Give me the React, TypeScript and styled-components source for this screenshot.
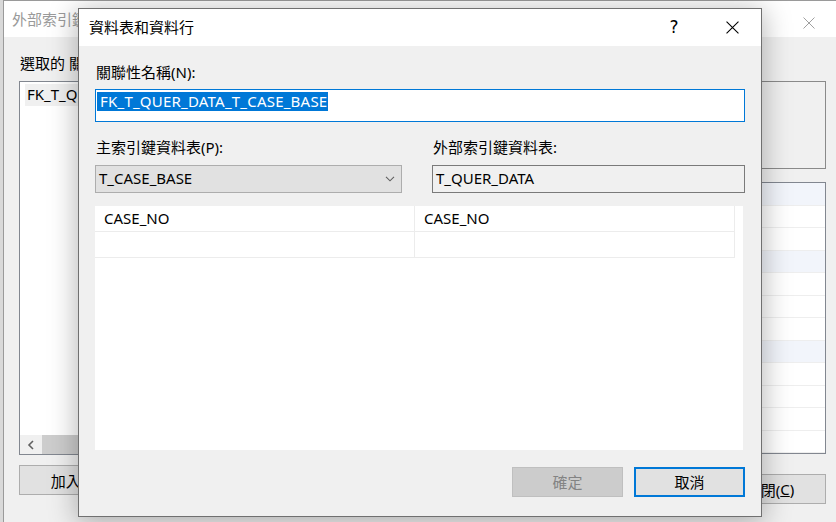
import React from "react";
import styled, { createGlobalStyle } from "styled-components";

const FONT = `"Noto Sans", "Noto Sans CJK TC", sans-serif`;

const Global = createGlobalStyle`
  html, body { margin: 0; padding: 0; }
  body {
    width: 836px; height: 522px; overflow: hidden;
    background: #d9d9d9;
    font-family: ${FONT};
    font-size: 15px;
    color: #000;
  }
  #root { width: 836px; height: 522px; position: relative; overflow: hidden; }
`;

const Desktop = styled.div`
  position: relative;
  width: 836px;
  height: 522px;
`;

/* ---------- background window ---------- */
const BgWindow = styled.div`
  position: absolute;
  left: 3px;
  top: 0;
  width: 840px;
  height: 530px;
  border-top: 1px solid #9a9a9a;
  border-left: 1px solid #9a9a9a;
  background: #f0f0f0;
  display: flex;
  flex-direction: column;
`;

const BgTitle = styled.div`
  height: 36px;
  background: #fff;
  display: flex;
  align-items: center;
  padding-left: 8px;
  padding-bottom: 1px;
  box-sizing: border-box;
  color: #9a9a9a;
  position: relative;
`;

const BgClose = styled.div`
  position: absolute;
  left: 799px;
  top: 12px;
  width: 12px;
  height: 12px;
`;

const BgBody = styled.div`
  flex: 1;
  display: grid;
  grid-template-columns: 300px 1fr;
  column-gap: 40px;
  padding: 0 18px 0 15px;
`;

const BgCol = styled.div`
  display: flex;
  flex-direction: column;
`;

const BgLabel = styled.div`
  height: 20px;
  line-height: 20px;
  margin-top: 16px;
  margin-left: 1px;
`;

const BgList = styled.div<{ $h: number; $top: number }>`
  margin-top: ${(p) => p.$top}px;
  height: ${(p) => p.$h}px;
  border: 1px solid #828790;
  background: #fff;
  display: flex;
  flex-direction: column;
  position: relative;
`;

const BgListItem = styled.div`
  margin: 2px 0 0 5px;
  height: 22px;
  line-height: 21px;
  background: #f0f0f0;
  padding-left: 2px;
`;

const HScroll = styled.div`
  margin-top: auto;
  height: 19px;
  display: flex;
  background: #f0f0f0;
`;

const ScrollArrow = styled.div`
  width: 22px;
  display: flex;
  align-items: center;
  justify-content: center;
`;

const ScrollThumb = styled.div`
  flex: 1;
  background: #cdcdcd;
`;

const BgBox = styled.div`
  margin-top: 44px;
  height: 86px;
  border: 1px solid #8a8a8a;
  background: #f0f0f0;
`;

const PropRow = styled.div<{ $alt: boolean }>`
  height: 22px;
  border-bottom: 1px solid #eeeeee;
  background: ${(p) => (p.$alt ? "#f2f5fb" : "#fff")};
`;

const BgButton = styled.div<{ $top: number; $w: number; $self?: string }>`
  margin-top: ${(p) => p.$top}px;
  width: ${(p) => p.$w}px;
  height: 28px;
  align-self: ${(p) => p.$self || "flex-start"};
  border: 1px solid #adadad;
  background: #e1e1e1;
  display: flex;
  align-items: center;
  justify-content: center;
`;

/* ---------- dialog ---------- */
const Dialog = styled.div`
  position: absolute;
  left: 78px;
  top: 8px;
  width: 682px;
  height: 507px;
  border: 1px solid #707070;
  background: #f0f0f0;
  box-shadow: 0 4px 26px 2px rgba(0, 0, 0, 0.28);
  display: flex;
  flex-direction: column;
`;

const TitleBar = styled.div`
  height: 37px;
  background: #fff;
  display: flex;
  align-items: center;
`;

const TitleText = styled.div`
  flex: 1;
  padding-left: 10px;
  padding-bottom: 2px;
`;

const TitleBtn = styled.div`
  width: 58px;
  height: 37px;
  display: flex;
  align-items: center;
  justify-content: center;
`;

const Help = styled.span`
  font-family: "Segoe UI", "DejaVu Sans", sans-serif;
  font-size: 17px;
  line-height: 1;
  margin-top: -1px;
`;

const Body = styled.div`
  flex: 1;
  display: flex;
  flex-direction: column;
  padding: 0 16px 0 16px;
`;

const Label = styled.div<{ $top: number }>`
  height: 20px;
  line-height: 19px;
  margin-top: ${(p) => p.$top}px;
  padding-left: 1px;
`;

const NameInput = styled.div`
  margin-top: 6px;
  height: 31px;
  border: 1px solid #0078d7;
  background: #fff;
  display: flex;
  align-items: flex-start;
  padding: 2px 0 0 1px;
  box-sizing: content-box;
  height: 29px;
`;

const Selected = styled.span`
  background: #0078d7;
  color: #fff;
  height: 19px;
  line-height: 19px;
  padding: 0 1px 0 3px;
  letter-spacing: 0.22px;
`;

const TwoCols = styled.div`
  display: grid;
  grid-template-columns: 307px 313px;
  column-gap: 30px;
`;

const Field = styled.div`
  display: flex;
  flex-direction: column;
`;

const Combo = styled.div`
  margin-top: 7px;
  height: 26px;
  border: 1px solid #adadad;
  background: #e1e1e1;
  display: flex;
  align-items: center;
  padding: 0 6px 0 3px;
`;

const ComboText = styled.div`
  flex: 1;
  padding-bottom: 2px;
`;

const ReadOnly = styled.div`
  margin-top: 7px;
  height: 26px;
  border: 1px solid #7a7a7a;
  background: #f0f0f0;
  display: flex;
  align-items: center;
  padding: 0 0 2px 3px;
  box-sizing: content-box;
  height: 24px;
`;

const Grid = styled.div`
  margin-top: 13px;
  width: 648px;
  height: 244px;
  background: #fff;
`;

const GridTable = styled.div`
  width: 640px;
  display: grid;
  grid-template-columns: 320px 320px;
`;

const Cell = styled.div`
  height: 26px;
  line-height: 24px;
  padding-left: 9px;
  border-bottom: 1px solid #ececec;
  border-right: 1px solid #ececec;
  box-sizing: border-box;
`;

const Footer = styled.div`
  margin-top: 17px;
  display: flex;
  justify-content: flex-end;
  gap: 11px;
`;

const Button = styled.div<{ $kind: "disabled" | "default" }>`
  width: 111px;
  height: 30px;
  box-sizing: border-box;
  display: flex;
  align-items: center;
  justify-content: center;
  padding-bottom: 1px;
  background: ${(p) => (p.$kind === "disabled" ? "#cccccc" : "#e1e1e1")};
  border: ${(p) =>
    p.$kind === "disabled" ? "1px solid #bfbfbf" : "2px solid #0078d7"};
  color: ${(p) => (p.$kind === "disabled" ? "#838383" : "#000")};
`;

const Underline = styled.span`
  text-decoration: underline;
`;

const XIcon = ({ color, size }: { color: string; size: number }) => (
  <svg width={size} height={size} viewBox="0 0 12 12">
    <path d="M0.5 0.5 L11.5 11.5 M11.5 0.5 L0.5 11.5" stroke={color} strokeWidth="1" fill="none" />
  </svg>
);

const propAlt = [true, false, false, true, false, false, false, true, false, false, false, false];

export default function App() {
  return (
    <Desktop>
      <Global />
      <BgWindow>
        <BgTitle>
          外部索引鍵關聯性
          <BgClose>
            <XIcon color="#a0a0a0" size={12} />
          </BgClose>
        </BgTitle>
        <BgBody>
          <BgCol>
            <BgLabel>選取的 關聯性(S):</BgLabel>
            <BgList $top={8} $h={372}>
              <BgListItem>FK_T_QUER_DATA_T_CASE_BASE</BgListItem>
              <HScroll>
                <ScrollArrow>
                  <svg width="8" height="10" viewBox="0 0 8 10">
                    <path d="M6 1 L2 5 L6 9" stroke="#606060" strokeWidth="1.6" fill="none" />
                  </svg>
                </ScrollArrow>
                <ScrollThumb />
              </HScroll>
            </BgList>
            <BgButton $top={10} $w={110}>加入(A)</BgButton>
          </BgCol>
          <BgCol>
            <BgBox />
            <BgList $top={13} $h={270}>
              {propAlt.map((a, i) => (
                <PropRow key={i} $alt={a} />
              ))}
            </BgList>
            <BgButton $top={20} $w={110} $self="flex-end">
              關閉(<Underline>C</Underline>)
            </BgButton>
          </BgCol>
        </BgBody>
      </BgWindow>

      <Dialog>
        <TitleBar>
          <TitleText>資料表和資料行</TitleText>
          <TitleBtn>
            <Help>?</Help>
          </TitleBtn>
          <TitleBtn>
            <XIcon color="#000" size={13} />
          </TitleBtn>
        </TitleBar>
        <Body>
          <Label $top={17}>關聯性名稱(N):</Label>
          <NameInput>
            <Selected>FK_T_QUER_DATA_T_CASE_BASE</Selected>
          </NameInput>
          <TwoCols>
            <Field>
              <Label $top={16}>主索引鍵資料表(P):</Label>
              <Combo>
                <ComboText>T_CASE_BASE</ComboText>
                <svg width="10" height="6" viewBox="0 0 10 6">
                  <path d="M1 0.8 L5 4.8 L9 0.8" stroke="#606060" strokeWidth="1.1" fill="none" />
                </svg>
              </Combo>
            </Field>
            <Field>
              <Label $top={16}>外部索引鍵資料表:</Label>
              <ReadOnly>T_QUER_DATA</ReadOnly>
            </Field>
          </TwoCols>
          <Grid>
            <GridTable>
              <Cell>CASE_NO</Cell>
              <Cell>CASE_NO</Cell>
              <Cell />
              <Cell />
            </GridTable>
          </Grid>
          <Footer>
            <Button $kind="disabled">確定</Button>
            <Button $kind="default">取消</Button>
          </Footer>
        </Body>
      </Dialog>
    </Desktop>
  );
}
